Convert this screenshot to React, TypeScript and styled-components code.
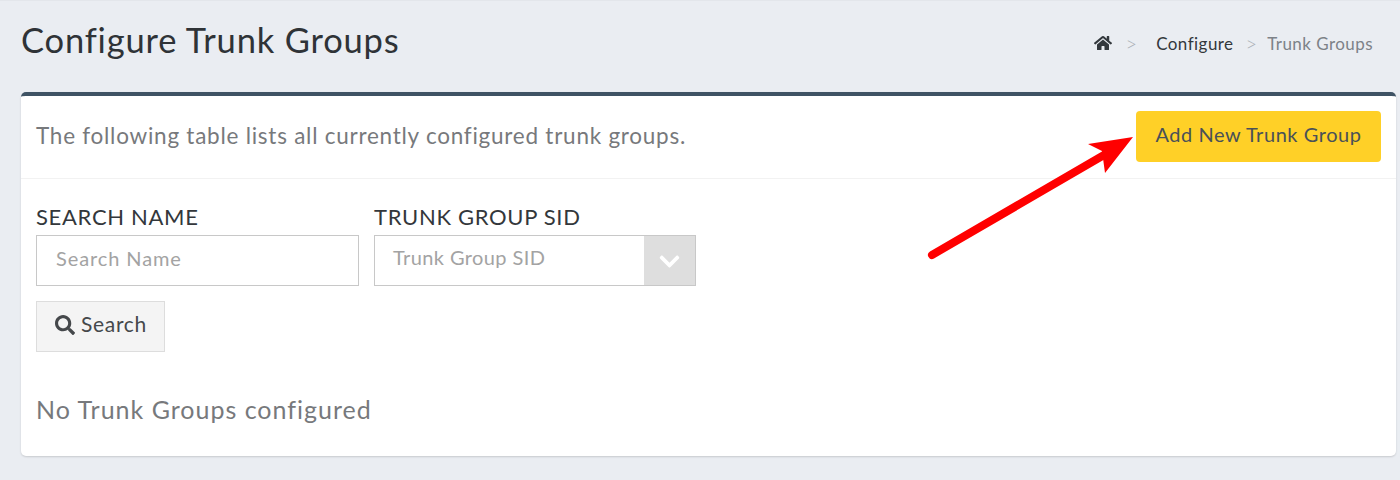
import React from 'react';
import styled, { createGlobalStyle } from 'styled-components';
import { FaHome, FaSearch, FaChevronDown } from 'react-icons/fa';

const GlobalStyle = createGlobalStyle`
  html, body {
    margin: 0;
    padding: 0;
    height: 480px;
    overflow: hidden;
    background: #eaedf2;
    font-family: Lato, "Liberation Sans", sans-serif;
  }
`;

const Page = styled.div`
  box-sizing: border-box;
  height: 480px;
  padding: 0 4px 0 21px;
  border-top: 1px solid #e3e6eb;
`;

const PageHeader = styled.header`
  display: flex;
  justify-content: space-between;
  align-items: flex-start;
  height: 91px;
`;

const Title = styled.h1`
  margin: 19px 0 0;
  font-size: 34.5px;
  line-height: 40px;
  font-weight: 400;
  letter-spacing: 0.82px;
  color: #2f3337;
`;

const Breadcrumb = styled.nav`
  display: flex;
  align-items: center;
  height: 20px;
  margin: 32px 23px 0 0;
  font-size: 17px;
  letter-spacing: 0.45px;
  color: #7d8288;
`;

const HomeIcon = styled(FaHome)`
  width: 18px;
  height: 18px;
  color: #33383d;
`;

const Separator = styled.span`
  margin: 0 19px 0 14px;
  color: #a9aeb5;
  font-size: 20px;
  font-weight: 300;
  letter-spacing: 0;
`;

const CurrentSeparator = styled(Separator)`
  margin: 0 10px 0 12px;
`;

const Crumb = styled.span`
  color: #33383d;
`;

const Card = styled.section`
  position: relative;
  box-sizing: border-box;
  height: 364px;
  background: #fff;
  border-top: 4px solid #3f5364;
  border-radius: 5px;
  box-shadow: 0 1px 2px rgba(0, 0, 0, 0.15);
`;

const CardHeader = styled.div`
  display: flex;
  align-items: center;
  justify-content: space-between;
  box-sizing: border-box;
  height: 83px;
  padding: 0 15px;
  border-bottom: 1px solid #f2f2f2;
`;

const Intro = styled.p`
  margin: 0 0 4px;
  font-size: 22.5px;
  letter-spacing: 0.75px;
  color: #77797c;
`;

const AddButton = styled.button`
  box-sizing: border-box;
  width: 245px;
  height: 51px;
  margin-top: -1px;
  padding: 0 0 6px;
  border: 0;
  border-radius: 4px;
  background: #ffd027;
  color: #4a5158;
  font: 400 20px Lato, "Liberation Sans", sans-serif;
  letter-spacing: 0.55px;
`;

const CardBody = styled.div`
  padding: 25px 15px 0;
`;

const FieldRow = styled.div`
  display: flex;
  gap: 15px;
`;

const Field = styled.div`
  display: flex;
  flex-direction: column;
  width: ${({ $width }: { $width: number }) => $width}px;
`;

const Label = styled.label`
  height: 31px;
  font-size: 22px;
  line-height: 26px;
  color: #33373b;
  letter-spacing: 0.68px;
`;

const TextBox = styled.div`
  display: flex;
  align-items: center;
  justify-content: space-between;
  box-sizing: border-box;
  height: 51px;
  padding-left: 19px;
  border: 1px solid #c8c8c8;
  font-size: 20px;
  letter-spacing: 0.9px;
  color: #a3a3a3;
`;

const InputText = styled.span`
  margin-top: -6px;
`;

const SelectArrow = styled.span`
  display: flex;
  align-items: center;
  justify-content: center;
  align-self: stretch;
  width: 51px;
  padding-top: 2px;
  box-sizing: border-box;
  background: #dedede;
  color: #fff;
  font-size: 23px;
`;

const SelectText = styled.span`
  margin: -7px 0 0 -1px;
  letter-spacing: 0.4px;
`;

const SearchButton = styled.button`
  display: flex;
  align-items: center;
  gap: 6px;
  box-sizing: border-box;
  width: 129px;
  height: 51px;
  margin-top: 15px;
  padding: 0 0 7px 18px;
  border: 1px solid #dddddd;
  background: #f4f4f4;
  color: #45484b;
  font: 400 21px Lato, "Liberation Sans", sans-serif;
  letter-spacing: 0.7px;
`;

const SearchIcon = styled(FaSearch)`
  width: 20px;
  height: 20px;
  margin-top: 3px;
`;

const EmptyText = styled.p`
  margin: 42px 0 0;
  font-size: 25px;
  line-height: 30px;
  letter-spacing: 1px;
  color: #77797c;
`;

const ArrowOverlay = styled.svg`
  position: absolute;
  left: 879px;
  top: 30px;
  pointer-events: none;
`;

const App = () => (
  <>
    <GlobalStyle />
    <Page>
      <PageHeader>
        <Title>Configure Trunk Groups</Title>
        <Breadcrumb>
          <HomeIcon />
          <Separator>&gt;</Separator>
          <Crumb>Configure</Crumb>
          <CurrentSeparator>&gt;</CurrentSeparator>
          <span>Trunk Groups</span>
        </Breadcrumb>
      </PageHeader>
      <Card>
        <CardHeader>
          <Intro>The following table lists all currently configured trunk groups.</Intro>
          <AddButton>Add New Trunk Group</AddButton>
        </CardHeader>
        <CardBody>
          <FieldRow>
            <Field $width={323}>
              <Label>SEARCH NAME</Label>
              <TextBox>
                <InputText>Search Name</InputText>
              </TextBox>
            </Field>
            <Field $width={322}>
              <Label>TRUNK GROUP SID</Label>
              <TextBox>
                <SelectText>Trunk Group SID</SelectText>
                <SelectArrow>
                  <FaChevronDown />
                </SelectArrow>
              </TextBox>
            </Field>
          </FieldRow>
          <SearchButton>
            <SearchIcon />
            Search
          </SearchButton>
          <EmptyText>No Trunk Groups configured</EmptyText>
        </CardBody>
        {/* annotation drawn on top of the screenshot */}
        <ArrowOverlay width="240" height="150" viewBox="879 30 240 150">
          <g transform="translate(-21 -96)">
            <line x1="932" y1="255" x2="1104" y2="155" stroke="#ff0000" strokeWidth="8" strokeLinecap="round" />
            <polygon points="1088,144 1133,137 1105,173 1102,151" fill="#ff0000" />
          </g>
        </ArrowOverlay>
      </Card>
    </Page>
  </>
);

export default App;
